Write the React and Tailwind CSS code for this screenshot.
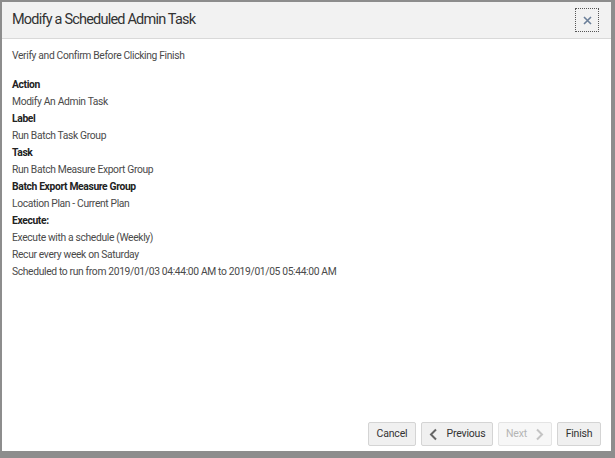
import React from 'react';

const rows = [
  { label: 'Action', value: ['Modify An Admin Task'] },
  { label: 'Label', value: ['Run Batch Task Group'] },
  { label: 'Task', value: ['Run Batch Measure Export Group'] },
  { label: 'Batch Export Measure Group', value: ['Location Plan - Current Plan'] },
  {
    label: 'Execute:',
    value: [
      'Execute with a schedule (Weekly)',
      'Recur every week on Saturday',
      'Scheduled to run from 2019/01/03 04:44:00 AM to 2019/01/05 05:44:00 AM',
    ],
  },
];

const Chevron = ({ dir, className }) => (
  <svg width="9" height="13" viewBox="0 0 9 13" className={className}>
    {dir === 'left' ? (
      <path d="M7 1.5 L2 6.5 L7 11.5" fill="none" stroke="currentColor" strokeWidth="2" />
    ) : (
      <path d="M2 1.5 L7 6.5 L2 11.5" fill="none" stroke="currentColor" strokeWidth="2" />
    )}
  </svg>
);

export default function App() {
  return (
    <div
      className="w-[615px] h-[458px] bg-[#8d8d8d] pt-[2px] pl-[2px] pr-[4px] pb-[7px]"
      style={{ fontFamily: 'Roboto, "Open Sans", sans-serif' }}
    >
      <div className="h-full bg-white flex flex-col">
        {/* Header */}
        <div className="h-[37px] bg-[#f2f2f2] border-b border-[#d9d9d9] flex items-center justify-between pl-[10px] pr-[12px] shrink-0">
          <h1 className="text-[14.5px] text-[#333] tracking-[-0.8px]">Modify a Scheduled Admin Task</h1>
          <button className="w-[24px] h-[24px] border border-dotted border-[#555] flex items-center justify-center text-[#6b7f99]">
            <svg width="9" height="9" viewBox="0 0 9 9">
              <path d="M1 1 L8 8 M8 1 L1 8" stroke="currentColor" strokeWidth="1.6" />
            </svg>
          </button>
        </div>

        {/* Body */}
        <div className="flex-1 pl-[10px] pt-[8px] text-[10.3px] leading-[17px] text-[#4a4a4a] tracking-[-0.35px]">
          <p className="mb-[12px]">Verify and Confirm Before Clicking Finish</p>
          {rows.map((r) => (
            <div key={r.label}>
              <div className="font-bold text-[#222]">{r.label}</div>
              {r.value.map((v) => (
                <div key={v}>{v}</div>
              ))}
            </div>
          ))}
        </div>

        {/* Footer */}
        <div className="flex justify-end gap-[5px] pr-[10px] pb-[5px] text-[10.5px] tracking-[-0.2px]">
          <button className="h-[24px] w-[48px] bg-[#f0f0f0] border border-[#d4d4d4] rounded-[2px] text-[#333]">Cancel</button>
          <button className="h-[24px] w-[72px] bg-[#f0f0f0] border border-[#d4d4d4] rounded-[2px] text-[#333] flex items-center justify-center gap-[9px]">
            <Chevron dir="left" className="text-[#666]" />
            Previous
          </button>
          <button className="h-[24px] w-[54px] bg-[#f7f7f7] border border-[#e4e4e4] rounded-[2px] text-[#b5b5b5] flex items-center justify-center gap-[8px]">
            Next
            <Chevron dir="right" className="text-[#c4c4c4]" />
          </button>
          <button className="h-[24px] w-[44px] bg-[#f0f0f0] border border-[#d4d4d4] rounded-[2px] text-[#333]">Finish</button>
        </div>
      </div>
    </div>
  );
}
